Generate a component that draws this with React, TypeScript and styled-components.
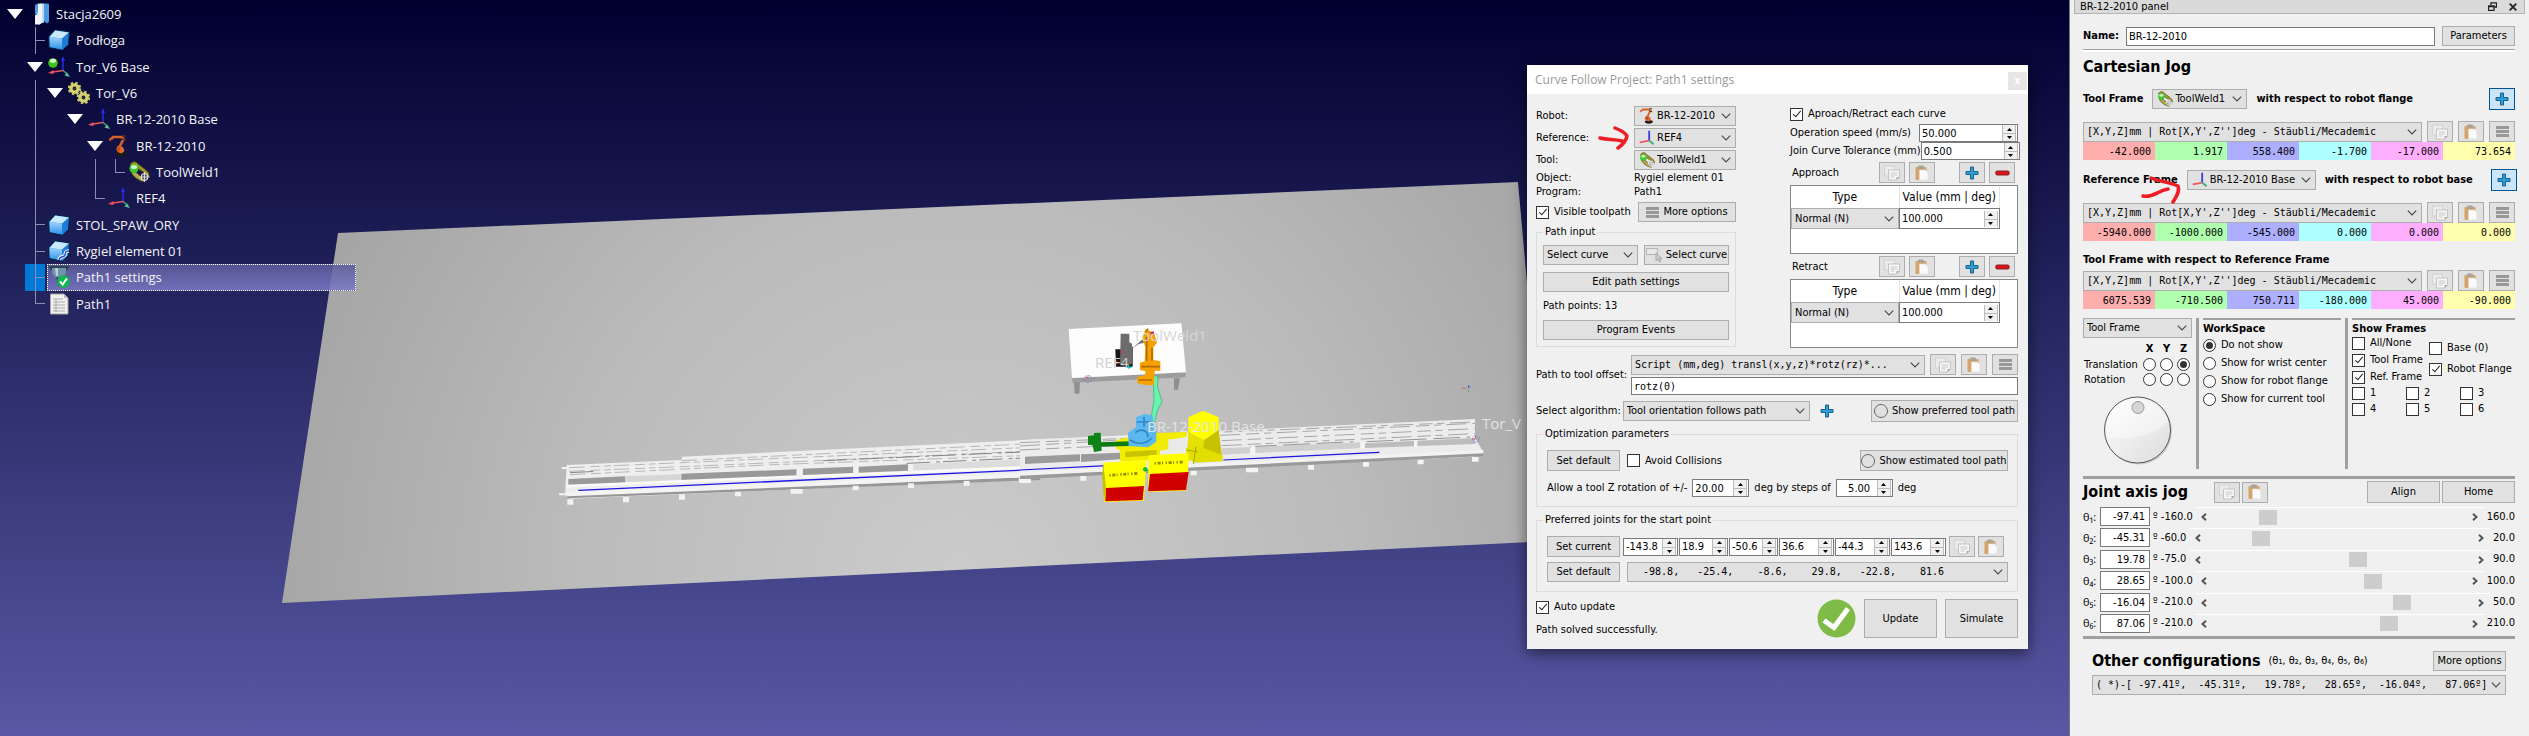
import React from "react";
import styled, { createGlobalStyle, css } from "styled-components";

const ui = `"DejaVu Sans Condensed", "DejaVu Sans", Tahoma, sans-serif`;
const mono = `"DejaVu Sans Mono", Consolas, monospace`;
const humanist = `"Open Sans", "Segoe UI", sans-serif`;

const Global = createGlobalStyle`
  *, *::before, *::after { box-sizing: border-box; }
  body { margin: 0; background: #00002f; font: 11px/14px ${ui}; color: #000; }
  button, input, select { font: inherit; color: inherit; margin: 0; }
`;

/* ---------- shell ---------- */

const Shell = styled.div`
  display: flex;
  min-height: 100vh;
  overflow: hidden;
`;

const Viewport = styled.main`
  position: relative;
  flex: 1;
  min-width: 0;
  background: linear-gradient(#00002f, #5858a4);
`;

const SceneSvg = styled.svg`
  position: absolute;
  inset: 0;
  width: 100%;
  height: 100%;
`;

/* ---------- station tree ---------- */

const Tree = styled.ul`
  position: relative;
  display: grid;
  grid-template-rows: repeat(12, 1fr);
  width: 356px;
  height: 316px;
  margin: 1px 0 0;
  padding: 0 0 0 5px;
  list-style: none;
  font: 13px/20px ${humanist};
  color: #f4f4f8;
`;

const TreeRow = styled.li`
  display: flex;
  align-items: stretch;
`;

const line = "#8d8db0";
const Guide = styled.span<{ $kind: string; $active?: boolean }>`
  flex: none;
  display: flex;
  align-items: center;
  justify-content: center;
  width: 20px;
  background-repeat: no-repeat;
  ${({ $kind }) =>
    ($kind === "|" || $kind === "+" || $kind === "L") &&
    css`
      background-image: linear-gradient(${line}, ${line}),
        linear-gradient(${line}, ${line});
      background-position: 10px 0, 10px 50%;
      background-size: 1px ${$kind === "L" ? "50%" : "100%"},
        ${$kind === "|" ? "0 0" : "10px 1px"};
    `}
  ${({ $active }) => $active && "background-color: #0078d7;"}
`;

const TreeItem = styled.span<{ $active?: boolean }>`
  display: flex;
  flex: 1;
  align-items: center;
  gap: 6px;
  margin-left: 2px;
  white-space: nowrap;
  border: 1px solid transparent;
  ${({ $active }) =>
    $active &&
    css`
      border: 1px dotted #fff;
      background: linear-gradient(#5c5c9ce0, #7a7ac6e0);
    `}
`;

/* ---------- controls ---------- */

const Button = styled.button<{ $w?: number; $h?: number; $on?: boolean }>`
  flex: none;
  display: flex;
  align-items: center;
  justify-content: center;
  gap: 4px;
  width: ${({ $w }) => ($w ? `${$w}px` : "100%")};
  height: ${({ $h }) => $h ?? 20}px;
  padding: 0;
  white-space: nowrap;
  background: ${({ $on }) => ($on ? "#cce4f7" : "#e1e1e1")};
  border: 1px solid ${({ $on }) => ($on ? "#005499" : "#adadad")};
`;

const SelectBox = styled.span<{ $w?: number; $mono?: boolean }>`
  display: grid;
  align-items: center;
  ${({ $w }) => ($w ? `flex: none; width: ${$w}px;` : "flex: 1; min-width: 0;")}
  height: 20px;
  background: #e1e1e1;
  border: 1px solid #adadad;
  ${({ $mono }) => $mono && `font: 10px/14px ${mono};`}
  & > * {
    grid-area: 1 / 1;
  }
  & > svg {
    pointer-events: none;
    z-index: 1;
    margin-left: 4px;
  }
  & > svg:last-child {
    justify-self: end;
    margin-right: 4px;
  }
`;

const NativeSelect = styled.select<{ $icon?: boolean }>`
  appearance: none;
  width: 100%;
  height: 100%;
  padding: 0 0 0 ${({ $icon }) => ($icon ? 22 : 3)}px;
  border: 0;
  background: transparent;
  white-space: pre;
`;

const Field = styled.input<{ $w?: number; $right?: boolean }>`
  ${({ $w }) => ($w ? `flex: none; width: ${$w}px;` : "flex: 1; min-width: 0;")}
  height: 19px;
  padding: 0 ${({ $right }) => ($right ? 4 : 2)}px;
  border: 1px solid #7a7a7a;
  background: #fff;
  text-align: ${({ $right }) => ($right ? "right" : "left")};
`;

const ScriptField = styled(Field)`
  width: 100%;
  flex: none;
  height: 18px;
  font: 10px/14px ${mono};
`;

const SpinBox = styled.span<{ $w: number }>`
  flex: none;
  display: flex;
  align-items: center;
  width: ${({ $w }) => $w}px;
  height: 18px;
  padding-right: 1px;
  background: #fff;
  border: 1px solid #7a7a7a;
  input {
    flex: 1;
    width: 0;
    min-width: 0;
    height: 16px;
    padding: 0 0 0 2px;
    border: 0;
    background: transparent;
  }
`;

const Steps = styled.span`
  display: grid;
  width: 14px;
  height: 16px;
  border: solid #bbb;
  border-width: 0 1px;
  button {
    display: flex;
    align-items: center;
    justify-content: center;
    padding: 0;
    height: 8px;
    border: 0;
    background: #f0f0f0;
  }
  button + button {
    border-top: 1px solid #bbb;
  }
`;

const Tick = styled.label`
  display: flex;
  align-items: center;
  gap: 5px;
  white-space: nowrap;
`;

const Box = styled.input`
  appearance: none;
  display: grid;
  place-items: center;
  flex: none;
  width: 13px;
  height: 13px;
  background: #fff;
  border: 1px solid #333;
  &:checked::before {
    content: "";
    width: 4px;
    height: 8px;
    margin-bottom: 2px;
    border: solid #222;
    border-width: 0 1px 1px 0;
    transform: rotate(40deg);
  }
`;

const Dot = styled.input`
  appearance: none;
  display: grid;
  place-items: center;
  flex: none;
  width: 13px;
  height: 13px;
  border: 1px solid #333;
  border-radius: 50%;
  background: #fff;
  &:checked::before {
    content: "";
    width: 7px;
    height: 7px;
    border-radius: 50%;
    background: #333;
  }
`;

const Ring = styled.span`
  width: 14px;
  height: 14px;
  border: 1px solid #666;
  border-radius: 50%;
`;

const Row = styled.div<{ $h?: number; $gap?: number; $mt?: number; $center?: boolean }>`
  display: flex;
  align-items: center;
  ${({ $center }) => $center && "justify-content: center;"}
  white-space: nowrap;
  gap: ${({ $gap }) => $gap ?? 0}px;
  margin-top: ${({ $mt }) => $mt ?? 0}px;
  ${({ $h }) => $h && `height: ${$h}px;`}
`;

const Stack = styled.div<{ $gap?: number }>`
  display: flex;
  flex-direction: column;
  flex: 1;
  min-width: 0;
  gap: ${({ $gap }) => $gap ?? 0}px;
`;

const Push = styled.span<{ $w?: number }>`
  flex: ${({ $w }) => ($w ? `0 0 ${$w}px` : "1")};
`;

/* ---------- dialog ---------- */

const Dialog = styled.section`
  position: absolute;
  top: 65px;
  right: 41px;
  width: 501px;
  background: #f0f0f0;
  box-shadow: 0 4px 14px rgba(0, 0, 0, 0.55);
`;

const DialogBar = styled.header`
  display: flex;
  align-items: center;
  justify-content: space-between;
  height: 29px;
  padding: 0 1px 0 8px;
  background: #fff;
  color: #999;
  font: 12px/16px ${humanist};
  h2 {
    margin: 0;
    font: inherit;
  }
`;

const CloseButton = styled.button`
  width: 19px;
  height: 18px;
  margin-top: 3px;
  padding: 0;
  border: 0;
  background: #e6e6e6;
  color: #fff;
  font: bold 10px/14px ${ui};
`;

const DialogBody = styled.div`
  display: flex;
  flex-direction: column;
  gap: 6px;
  padding: 10px 10px 10px 9px;
`;

const Split = styled.div`
  display: flex;
  justify-content: space-between;
`;

const LeftColumn = styled.div`
  width: 200px;
`;

const RightColumn = styled.div`
  display: flex;
  flex-direction: column;
  gap: 2px;
  width: 228px;
  padding-top: 2px;
`;

const FormGrid = styled.div`
  position: relative;
  display: grid;
  grid-template-columns: 98px 102px;
  grid-template-rows: 23px 22px 22px 14px 14px;
  align-items: center;
`;

const OffsetLabel = styled.label`
  flex: none;
  width: 95px;
`;

const Group = styled.fieldset`
  min-width: 0;
  margin: 0;
  padding: 9px 9px 9px 10px;
  border: 1px solid #dcdcdc;
  legend {
    height: 14px;
    margin-left: -4px;
    padding: 0 2px;
  }
`;

const PathGroup = styled(Group)`
  margin-top: 2px;
  padding: 6px;
  legend {
    margin-left: 0;
  }
`;

const MoveBar = styled.div`
  display: flex;
  align-items: center;
  gap: 4px;
  height: 21px;
  padding: 0 3px 0 2px;
`;

const MoveFrame = styled.div`
  height: 69px;
  background: #fff;
  border: 1px solid #828790;
  table {
    width: 209px;
    border-collapse: collapse;
    table-layout: fixed;
  }
  th {
    height: 22px;
    padding: 0;
    font-weight: normal;
    font-size: 12px;
    border-right: 1px solid #e5e5e5;
  }
  th:first-child {
    width: 108px;
  }
  td {
    padding: 0;
  }
  td > span {
    width: 100%;
    height: 21px;
  }
`;

/* ---------- robot panel ---------- */

const Panel = styled.aside`
  flex: none;
  width: 460px;
  border-left: 1px solid #777;
  background: #f0f0f0;
`;

const PanelBar = styled.header`
  display: flex;
  align-items: center;
  gap: 12px;
  height: 14px;
  margin: 0 4px;
  padding: 0 7px 0 5px;
  background: #dadada;
  border: solid #b4b4b4;
  border-width: 0 1px 1px;
  h2 {
    flex: 1;
    margin: 0;
    font: 11px/12px ${ui};
  }
  button {
    display: flex;
    padding: 0;
    border: 0;
    background: none;
  }
`;

const PanelBody = styled.div`
  padding: 12px 14px 0 13px;
`;

const Title = styled.h3`
  margin: 0;
  font: bold 16px/24px ${ui};
  white-space: nowrap;
`;

const Strong = styled.b`
  white-space: nowrap;
`;

const NameLabel = styled.label`
  font-weight: bold;
`;

const Rule = styled.hr<{ $thick?: boolean; $mt: number }>`
  height: 3px;
  margin: ${({ $mt }) => $mt}px 0 0;
  border: 0;
  background: ${({ $thick }) => ($thick ? "#a0a0a0" : "#fff")};
  border-top: ${({ $thick }) => ($thick ? "0" : "1px solid #a0a0a0")};
`;

const Values = styled.div`
  display: grid;
  grid-template-columns: repeat(6, 1fr);
  input {
    width: 100%;
    height: 18px;
    padding: 0 4px 0 0;
    border: 0;
    text-align: right;
    font: 10px/14px ${mono};
  }
`;

const ValueCell = styled.input<{ $tint: string }>`
  background: ${({ $tint }) => $tint};
`;

const Trio = styled.div`
  display: grid;
  grid-template-columns: 109px 1fr 170px;
  gap: 4px;
  height: 151px;
  margin-top: 9px;
`;

const Ruled = styled.div`
  padding: 4px 0 0 4px;
  border-left: 3px solid #a0a0a0;
  background: linear-gradient(#a0a0a0, #a0a0a0) 4px 0 / 100% 2px no-repeat;
`;

const AxisGrid = styled.div`
  display: grid;
  grid-template-columns: 57px 17px 17px 17px;
  grid-template-rows: 17px 15px 15px;
  align-items: center;
  justify-items: center;
  margin-top: 2px;
  padding-left: 1px;
  & > span {
    justify-self: start;
  }
`;

const WorkList = styled.div`
  display: grid;
  grid-auto-rows: 18px;
`;

const FrameCols = styled.div`
  display: grid;
  grid-template-columns: 77px 1fr;
`;

const FrameCol = styled.div<{ $pad?: number; $gap?: number }>`
  display: grid;
  align-content: start;
  padding-top: ${({ $pad }) => $pad ?? 0}px;
  gap: ${({ $gap }) => $gap ?? 3}px;
`;

const NumberGrid = styled.div`
  display: grid;
  grid-template-columns: repeat(3, 54px);
  gap: 2px 0;
  margin-top: 2px;
`;

const Joints = styled.div`
  display: flex;
  flex-direction: column;
  justify-content: space-between;
  height: 126px;
  margin-top: 4px;
`;

const JointRow = styled.div`
  display: flex;
  align-items: center;
  gap: 3px;
  height: 19px;
`;

const JointLabel = styled.label`
  width: 14px;
  white-space: nowrap;
  font-family: ${humanist};
`;

const Scroll = styled.span`
  display: flex;
  align-items: center;
  flex: 1;
  height: 19px;
  border-top: 1px solid #fff;
  button {
    display: flex;
    justify-content: center;
    width: 17px;
    padding: 0;
    border: 0;
    background: none;
  }
  input {
    appearance: none;
    flex: 1;
    width: 0;
    height: 15px;
    background: transparent;
  }
  input::-webkit-slider-thumb {
    appearance: none;
    width: 18px;
    height: 15px;
    background: #cdcdcd;
  }
`;

const Other = styled.div`
  padding: 12px 9px 0;
`;

const Annotation = styled.svg<{ $x: number; $y: number }>`
  position: absolute;
  left: ${({ $x }) => $x}px;
  top: ${({ $y }) => $y}px;
  z-index: 2;
  pointer-events: none;
`;

const Anchor = styled(Row)`
  position: relative;
`;

/* ---------- icons ---------- */

const Chevron = () => (
  <svg width="10" height="6" viewBox="0 0 10 6" fill="none" stroke="#444">
    <path d="M.8 .7 5 4.9 9.200 .7" strokeWidth="1.100" />
  </svg>
);
const CopyIcon = () => (
  <svg width="16" height="16" viewBox="0 0 16 16">
    <rect x=".5" y="1" width="10" height="10" fill="#ebebeb" stroke="#d2d2d2" />
    <path d="M4.500 5h11v7l-3 3h-8z" fill="#f7f7f7" stroke="#c2c2c2" />
    <path d="M6.500 8h7M6.500 10h7M6.500 12h4" stroke="#c8c8c8" />
    <path d="M12.500 15v-3h3z" fill="#aaa" />
  </svg>
);
const PasteIcon = () => (
  <svg width="16" height="16" viewBox="0 0 16 16">
    <rect x="1.500" y="2" width="11" height="13" rx="1" fill="#d6a468" />
    <rect x="4" y=".5" width="6" height="3.500" rx="1" fill="#a9a39a" />
    <path d="M5.500 5h6l2.500 2.500V15H5.500z" fill="#fafafa" stroke="#ddd" strokeWidth=".6" />
  </svg>
);
const MenuIcon = () => (
  <svg width="13" height="11" viewBox="0 0 13 11" fill="#989898">
    <path d="M0 0h13v3H0zM0 4h13v3H0zM0 8h13v3H0z" />
  </svg>
);
const PlusIcon = () => (
  <svg width="14" height="14" viewBox="0 0 14 14">
    <path d="M5.500 1h3v4.500H13v3H8.500V13h-3V8.500H1v-3h4.500z" fill="#2a9fd8" stroke="#1f5f86" strokeLinejoin="round" />
  </svg>
);
const MinusIcon = () => (
  <svg width="15" height="6" viewBox="0 0 15 6">
    <rect x=".7" y="1" width="13.500" height="4" rx="1.500" fill="#d91616" stroke="#8c2020" />
  </svg>
);
const AxesIcon = ({ ball }: { ball?: boolean }) => (
  <svg width="22" height="22" viewBox="0 0 22 22">
    <path d="M15 14V4" stroke="#2a2aee" strokeWidth="1.500" />
    <path d="M15 0l2 5h-4z" fill="#2a2aee" />
    <path d="M15 14.500 5 16" stroke="#f0525e" strokeWidth="1.500" />
    <path d="M0 17l5.500-3v4z" fill="#f0525e" />
    <path d="M15 14.500l5 4" stroke="#3fae7c" strokeWidth="1.500" />
    <path d="M22 21l-5.500-1.500 2.500-3z" fill="#56c596" />
    {ball && (
      <>
        <circle cx="5" cy="7" r="4.800" fill="#3fc21c" />
        <ellipse cx="5" cy="4.800" rx="3" ry="2" fill="#d8f7cc" />
      </>
    )}
  </svg>
);
const SmallAxes = () => (
  <svg width="16" height="16" viewBox="0 0 22 22">
    <path d="M14 14V1" stroke="#3b3be6" strokeWidth="2.500" />
    <path d="M14 14.500 1 17" stroke="#ee5a64" strokeWidth="2.500" />
    <path d="M14 14.500l6 5" stroke="#3fae7c" strokeWidth="2.500" />
  </svg>
);
const RobotIcon = ({ size = 22 }: { size?: number }) => (
  <svg width={size} height={size} viewBox="0 0 22 22">
    <ellipse cx="13.500" cy="19" rx="5.500" ry="2.500" fill="#1a1a1a" />
    <path d="M3 4.500 5 2h9l1.500 2-4 8" fill="none" stroke="#d9622b" strokeWidth="2.600" strokeLinejoin="round" />
    <path d="M9 11l6 1 1.500 4-3 2.500-4-1.500z" fill="#e06b30" />
    <circle cx="10.500" cy="14" r="2.300" fill="#c24f1d" />
    <path d="M14 1h4M14 4l4 1" stroke="#552d1b" strokeWidth="1.500" />
    <path d="M2 3v3" stroke="#d9622b" strokeWidth="1.500" />
  </svg>
);
const ToolIcon = ({ size = 22 }: { size?: number }) => (
  <svg width={size} height={size} viewBox="0 0 22 22">
    <path d="M2 4c2-4 6-4 8-1l9 7c3 3 2 6 2 6l-3-3-7-5z" fill="#a39a2c" stroke="#55501a" />
    <path d="M3 10c1 5 6 8 10 10l4 1-2-3-6-6z" fill="#b3ab4a" stroke="#55501a" />
    <circle cx="6" cy="7.500" r="4.500" fill="#3fc930" />
    <ellipse cx="6" cy="6" rx="3" ry="2" fill="#cff7c6" />
    <circle cx="16.500" cy="16" r="3.500" fill="#8889" stroke="#f0f0f0" />
    <path d="M16.500 11v10M11.500 16h10" stroke="#f0f0f0" strokeWidth=".8" />
  </svg>
);
const CubeIcon = ({ curve }: { curve?: boolean }) => (
  <svg width="22" height="22" viewBox="0 0 22 22">
    <defs>
      <linearGradient id="cubeFace" x1="0" y1="0" x2="0" y2="1">
        <stop offset="0" stopColor="#9ed3fb" />
        <stop offset="1" stopColor="#2f93ea" />
      </linearGradient>
    </defs>
    <path d="M.8 7.500 7 .8l14.500 2-1 12.700-6 5.700L1 18.500z" fill="#1d7ad6" stroke="#05203f" />
    <path d="M1.500 8 7.200 1.600l13.600 1.800L14 9.500z" fill="#c9e7fd" />
    <path d="M1.500 8 14 9.500l.3 11L2 18z" fill="url(#cubeFace)" />
    {curve && <path d="M11 20c1-5 5-2 6-5s0-4 4-4" fill="none" stroke="#fff" strokeWidth="3.500" />}
    {curve && <path d="M11 20c1-5 5-2 6-5s0-4 4-4" fill="none" stroke="#2a49d0" strokeWidth="1.500" />}
  </svg>
);
const StationIcon = () => (
  <svg width="22" height="22" viewBox="0 0 22 22">
    <path d="M7 11V2l3-1.500h10l1 .5v18l-2 1.500z" fill="#4a97e2" />
    <path d="M10 1.500l6-1v19l-6 2z" fill="#b8dcfa" />
    <path d="M7 12c3 0 3-1 3-11l4-.5v18L12 21.500H7z" fill="#f1f3f5" />
  </svg>
);
const GearShape = ({ x, y }: { x: number; y: number }) => (
  <g transform={`translate(${x} ${y})`}>
    <circle r="5.600" fill="none" stroke="#c9c566" strokeWidth="2.400" strokeDasharray="2.400 2" />
    <circle r="3.600" fill="none" stroke="#d5d070" strokeWidth="3.400" />
    <circle r="1.500" fill="#333" />
  </g>
);
const GearsIcon = () => (
  <svg width="22" height="22" viewBox="0 0 22 22">
    <GearShape x={6.500} y={6.500} />
    <GearShape x={15.500} y={15.500} />
  </svg>
);
const SettingsIcon = () => (
  <svg width="22" height="22" viewBox="0 0 22 22">
    <path d="M0 0h22l-3 4H3z" fill="#2c4350" />
    <path d="M4 2h14v5l-3 4H7L4 7z" fill="#6f93a6" />
    <path d="M7 2h3v8H8z" fill="#b9d0dc" />
    <path d="M8 11h6l-1 5-2 5-2-5z" fill="#3b5664" />
    <circle cx="15.500" cy="15.500" r="6.300" fill="#12b84e" />
    <path d="M12 15.500l2.800 3 4-6" fill="none" stroke="#fff" strokeWidth="2" />
  </svg>
);
const PageIcon = () => (
  <svg width="22" height="22" viewBox="0 0 22 22">
    <path d="M2.500 1H16l4 4v16H2.500z" fill="#f0f0ee" stroke="#a5a5a5" />
    <path d="M16 1v4h4z" fill="#bbb" />
    <path d="M5 6h10M5 9h12M5 12h12M5 15h12M5 18h12M8 6v13" stroke="#aaa" />
  </svg>
);
const Caret = () => (
  <svg width="16" height="10" viewBox="0 0 16 10">
    <path d="M0 0h16L8 10z" fill="#fff" />
  </svg>
);
const PickIcon = () => (
  <svg width="16" height="16" viewBox="0 0 16 16">
    <rect x=".5" y="1.500" width="11" height="6" fill="#e8e8e8" stroke="#b5b5b5" />
    <path d="M10 6v8l2-2 1.500 3 1.500-.8-1.400-2.700H16z" fill="#ccc" stroke="#999" strokeWidth=".7" />
  </svg>
);
const SolvedIcon = () => (
  <svg width="39" height="39" viewBox="0 0 39 39">
    <circle cx="19.500" cy="19.500" r="19" fill="#7fbc47" />
    <path d="M7 21.500l10 7L31 9.500" fill="none" stroke="#fff" strokeWidth="5" />
  </svg>
);
const Triangle = ({ down }: { down?: boolean }) => (
  <svg width="5" height="3" viewBox="0 0 5 3">
    <path d={down ? "M0 0h5L2.500 3z" : "M0 3h5L2.500 0z"} />
  </svg>
);
const ScrollArrow = ({ right }: { right?: boolean }) => (
  <svg width="6" height="8" viewBox="0 0 6 8" fill="none" stroke="#555" strokeWidth="2">
    <path d={right ? "M1 .8 4.500 4 1 7.200" : "M5 .8 1.500 4 5 7.200"} />
  </svg>
);
const DialIcon = () => (
  <svg width="70" height="70" viewBox="0 0 70 70">
    <defs>
      <linearGradient id="dial" x1="0" y1="0" x2="1" y2="1">
        <stop offset="0" stopColor="#fff" />
        <stop offset="1" stopColor="#dcdcdc" />
      </linearGradient>
    </defs>
    <circle cx="35.500" cy="36" r="33.500" fill="#ccc" />
    <circle cx="34.500" cy="35" r="33" fill="url(#dial)" stroke="#555" />
    <path d="M4 42c20 4 45 0 61-15a32 32 0 0 0-61 0z" fill="#fff" opacity=".4" />
    <circle cx="35" cy="12.500" r="6" fill="#d6d6d6" stroke="#999" />
  </svg>
);

/* ---------- composed controls ---------- */

type SelectProps = { label: string; value: string; w?: number; icon?: React.ReactNode; code?: boolean };
const Select = ({ label, value, w, icon, code }: SelectProps) => (
  <SelectBox $w={w} $mono={code}>
    {icon}
    <NativeSelect aria-label={label} $icon={!!icon}>
      <option>{value}</option>
    </NativeSelect>
    <Chevron />
  </SelectBox>
);

const Spin = ({ label, value, w }: { label: string; value: string; w: number }) => (
  <SpinBox $w={w}>
    <input aria-label={label} defaultValue={value} />
    <Steps>
      <button type="button" aria-label={`Increase ${label}`}><Triangle /></button>
      <button type="button" aria-label={`Decrease ${label}`}><Triangle down /></button>
    </Steps>
  </SpinBox>
);

const Check = ({ label, on }: { label: string; on?: boolean }) => (
  <Tick><Box type="checkbox" defaultChecked={on} />{label}</Tick>
);

const CopyPaste = () => (
  <>
    <Button $w={26} $h={21} aria-label="Copy"><CopyIcon /></Button>
    <Button $w={26} $h={21} aria-label="Paste"><PasteIcon /></Button>
  </>
);

const Moves = ({ name }: { name: string }) => (
  <>
    <MoveBar>
      {name}
      <Push />
      <CopyPaste />
      <Push $w={16} />
      <Button $w={26} $h={21} aria-label={`Add ${name}`}><PlusIcon /></Button>
      <Button $w={26} $h={21} aria-label={`Remove ${name}`}><MinusIcon /></Button>
    </MoveBar>
    <MoveFrame>
      <table>
        <thead><tr><th>Type</th><th>Value (mm | deg)</th></tr></thead>
        <tbody>
          <tr>
            <td><Select label={`${name} type`} value="Normal (N)" w={107} /></td>
            <td><Spin label={`${name} value`} value="100.000" w={101} /></td>
          </tr>
        </tbody>
      </table>
    </MoveFrame>
  </>
);

const tints = ["#ffaeae", "#aeffae", "#aeaeff", "#aeffff", "#ffaeff", "#ffffae"];
const axisNames = ["X", "Y", "Z", "RX", "RY", "RZ"];
const Pose = ({ name, values, mt }: { name: string; values: string[]; mt?: number }) => (
  <>
    <Row $h={21} $gap={5} $mt={mt ?? 11}>
      <Select label={`${name} format`} value="[X,Y,Z]mm | Rot[X,Y',Z'']deg - Stäubli/Mecademic" code />
      <CopyPaste />
      <Button $w={26} $h={21} aria-label={`${name} menu`}><MenuIcon /></Button>
    </Row>
    <Values>
      {values.map((v, i) => (
        <ValueCell key={i} aria-label={`${name} ${axisNames[i]}`} defaultValue={v} $tint={tints[i]} />
      ))}
    </Values>
  </>
);

/* ---------- data ---------- */

const tree = [
  { text: "Stacja2609", guides: "v", icon: <StationIcon /> },
  { text: "Podłoga", guides: " +", icon: <CubeIcon /> },
  { text: "Tor_V6 Base", guides: " v", icon: <AxesIcon ball /> },
  { text: "Tor_V6", guides: " |v", icon: <GearsIcon /> },
  { text: "BR-12-2010 Base", guides: " | v", icon: <AxesIcon /> },
  { text: "BR-12-2010", guides: " |  v", icon: <RobotIcon /> },
  { text: "ToolWeld1", guides: " |  |L", icon: <ToolIcon /> },
  { text: "REF4", guides: " |  L", icon: <AxesIcon /> },
  { text: "STOL_SPAW_ORY", guides: " +", icon: <CubeIcon /> },
  { text: "Rygiel element 01", guides: " +", icon: <CubeIcon curve /> },
  { text: "Path1 settings", guides: " +", icon: <SettingsIcon />, active: true },
  { text: "Path1", guides: " L", icon: <PageIcon /> },
];

const joints = [
  { sub: "₁", value: "-97.41", min: -160, max: 160 },
  { sub: "₂", value: "-45.31", min: -60, max: 20 },
  { sub: "₃", value: "19.78", min: -75, max: 90 },
  { sub: "₄", value: "28.65", min: -100, max: 100 },
  { sub: "₅", value: "-16.04", min: -210, max: 50 },
  { sub: "₆", value: "87.06", min: -210, max: 210 },
];

const startJoints: [string, number][] = [
  ["-143.8", 55], ["18.9", 49], ["-50.6", 49], ["36.6", 55], ["-44.3", 55], ["143.6", 55],
];

/* ---------- scene ---------- */

const Scene = () => (
  <SceneSvg viewBox="0 0 2069 736" preserveAspectRatio="xMinYMin slice" aria-hidden="true">
    <defs>
      <radialGradient id="floor" gradientUnits="userSpaceOnUse" cx="960" cy="580" r="780">
        <stop offset="0" stopColor="#cbcbcb" />
        <stop offset=".5" stopColor="#bbb" />
        <stop offset="1" stopColor="#a0a0a0" />
      </radialGradient>
      <pattern id="holes" width="12" height="12" patternUnits="userSpaceOnUse" patternTransform="rotate(-3)">
        <rect width="12" height="12" fill="#fff" />
        <path d="M2 2h3v2H2zM8 8h2v2H8z" fill="#dedede" />
      </pattern>
    </defs>
    <path d="M338 233 1518 182 1550 541 282 603z" fill="url(#floor)" />

    {/* left half of the linear track */}
    <g transform="translate(540 400) scale(.33333)">
      <path d="M80 195 425 180V170L1500 118V238L90 296 75 285z" fill="#eee" />
      <path d="M85 237 255 229V252L85 260z" fill="#9a9a9a" />
      <path d="M255 229 422 222V246L255 254z" fill="#d6d6d6" />
      <path d="M424 221 770 208V232L424 246z" fill="#999" />
      <path d="M788 206 940 200V224L788 230z" fill="#999" />
      <path d="M956 200 1104 193V217L956 223z" fill="#999" />
      <path d="M1120 193 1450 178V200L1120 214z" fill="#dcdcdc" />
      <path d="M1452 160H1500V194H1452z" fill="#a0a0a0" />
      <path d="M82 295 1500 240V230L82 285z" fill="#979797" />
      <path d="M82 283 1500 224" stroke="#f4f4f4" strokeWidth="12" />
      <path d="M88 203 425 188 1450 143M88 214 500 197 1450 154M90 224 700 194 1450 167M425 182 1450 132" stroke="#9c9c9c" strokeWidth="2" strokeDasharray="46 17 30 12 20 9" fill="none" />
      <path d="M850 182 1450 156M1100 190 1450 174M90 218 170 214" stroke="#707070" strokeWidth="2.500" strokeDasharray="70 18 12 9" />
      <path d="M80 258 1500 200" stroke="#fafafa" strokeWidth="8" />
      <path d="M115 271 1500 208" stroke="#1c14e0" strokeWidth="4" />
      <path d="M82 298h18v16H82zM249 291h18v16h-18zM417 283h18v16h-18zM585 275h18v14h-18zM752 267h36v14h-36zM938 257h18v14h-18zM1104 250h18v14h-18zM1271 243h18v14h-18zM1436 235h36v12h-36zM65 201h20v6H65zM57 280h26v6H57zM770 208h18v28h-18zM940 200h14v24h-14zM1104 192h14v24h-14z" fill="#f2f2f2" />
    </g>

    <g transform="translate(1020 300) scale(.33333)">
      {/* right half of the track */}
      <path d="M0 420 400 402 1365 357 1365 415 1390 455 1360 470 0 530z" fill="#ececec" />
      <path d="M605 445 690 441V460L605 464zM705 441 1020 427V445L705 459z" fill="#cfcfcf" />
      <path d="M1035 430 1365 414V432L1035 444z" fill="#bdbdbd" />
      <path d="M15 470 180 463V484L15 492zM183 463 300 458V478L183 486z" fill="#9b9b9b" />
      <path d="M0 538 1390 468 1390 456 0 526z" fill="#9a9a9a" />
      <path d="M0 522 1390 455" stroke="#f3f3f3" strokeWidth="10" />
      <path d="M0 428 320 415M0 450 300 436M600 406 1365 370M605 422 1365 386M605 437 1365 401M0 438 300 420M610 396 1365 366" stroke="#979797" strokeWidth="2.500" strokeDasharray="60 18 40 14 22 16" />
      <path d="M0 510 260 497M610 480 1078 457" stroke="#1c14e0" strokeWidth="3.500" />
      <path d="M1040 425 1350 411M690 440 1000 425" stroke="#666" strokeWidth="2" strokeDasharray="80 20" />
      <path d="M0 537h32v12H0zM181 528h18v14h-18zM512 512h18v14h-18zM678 503h36v14h-36zM864 495h18v14h-18zM1029 486h18v14h-18zM1193 479h18v14h-18zM1356 471h20v14h-20zM692 438h14v26h-14zM1022 427h12v20h-12zM1182 420h10v20h-10z" fill="#f4f4f4" />

      {/* welding table */}
      <path d="M162 245h18l-2 36h-14zM462 235h18l-6 34h-12z" fill="#8f8f8f" />
      <path d="M156 234 498 217 496 232 158 248z" fill="#9c9c9c" />
      <path d="M146 87 484 70 498 217 156 234z" fill="url(#holes)" />
      <path d="M286 148h18v-8h34v60h-50z" fill="#161616" />
      <path d="M302 101h26v26l8 4v62h-36z" fill="#6c6c6c" />
      <path d="M302 150v10M290 180v14" stroke="#e02020" strokeWidth="3" />
      <path d="M318 202h16M326 196v10" stroke="#00c8d8" strokeWidth="4" />
      <circle cx="204" cy="237" r="11" fill="none" stroke="#7a6ee8" strokeWidth="2" strokeDasharray="9 4" />
      <path d="M204 237V226M196 232h8" stroke="#d44" strokeWidth="2" />
      <path d="M336 146 362 122 378 112 372 128 356 132z" fill="#6b7378" />

      {/* arm */}
      <path d="M400 228h14l-2 30 14 48-14 26-12 52-12-2 14-80z" fill="#67f5ae" stroke="#2fae73" strokeWidth="2" />
      <path d="M376 88 388 92 402 98 411 128 400 142 400 180 421 184 421 212 404 212 402 254 380 256 352 250 352 230 376 226 376 214 360 210 360 188 374 184 376 140 366 118z" fill="#f7a100" />
      <path d="M380 112v70M396 144v38M364 200h56M356 240h40M384 86l-6 10" stroke="#b06c00" strokeWidth="5" />
      <path d="M388 98 402 94v12z" fill="#cc1166" />

      {/* carriage and cabinets */}
      <path d="M288 420 380 400 500 396 500 410 446 420 446 448 420 452 420 480 300 484 300 450 288 446z" fill="#f1ec00" />
      <path d="M316 455 410 450v16l-94 6z" fill="#c9c400" />
      <path d="M240 427 330 424V438L240 440z" fill="#0a7a12" />
      <path d="M204 408 222 406 222 399 242 398 245 452 222 456 218 436 204 434z" fill="#0c8416" />
      <path d="M445 418h50v36h-50z" fill="#e9e9e9" />
      <path d="M505 352 549 332 596 352 596 390 552 420 505 395z" fill="#ff0" />
      <path d="M505 395 552 420 545 475 500 484z" fill="#e6e200" />
      <path d="M596 390 552 420 545 475 606 470z" fill="#c7c200" />
      <path d="M497 445 540 440 608 466 608 484 525 488 500 470z" fill="#e2de00" />
      <path d="M520 492l8-52M500 450l34 6" stroke="#a8a400" strokeWidth="3" />
      <path d="M348 352 372 342 398 346 402 376 410 392 408 426 384 442 326 438 324 398 348 382z" fill="#5db7f0" />
      <path d="M350 366h42M346 398c20-18 44 0 36 14M330 420c20 14 46 14 66-6M372 350v30" fill="none" stroke="#2d86c4" strokeWidth="5" />
      <path d="M250 488 372 480 380 485 374 560 372 602 252 606z" fill="#ff0" />
      <path d="M250 488 258 566 252 606 247 530z" fill="#c4bf00" />
      <path d="M258 564 372 558 368 600 256 604z" fill="#d10000" />
      <path d="M386 466 506 460 504 518 498 572 384 576z" fill="#ff0" />
      <path d="M390 522 506 516 498 570 384 574z" fill="#d10000" />
      <path d="M404 490 492 486M268 526 352 520" stroke="#8f8a00" strokeWidth="8" strokeDasharray="4 5 9 4 3 8" />
      <circle cx="376" cy="508" r="7" fill="#0cc43c" />

      {/* free frames */}
      <path d="M1324 265h16" stroke="#e05050" strokeWidth="2" />
      <path d="M1346 256v8" stroke="#4b4bf0" strokeWidth="4" />
      <path d="M1346 270v8" stroke="#3fc24b" strokeWidth="3" />
      <circle cx="1367" cy="417" r="10" fill="none" stroke="#7a6ee8" strokeWidth="2" strokeDasharray="9 4" />
      <path d="M1367 417v-10M1358 417h8" stroke="#d44" strokeWidth="2" />
    </g>

    <g fill="#e4e4e4" fontFamily={humanist} fontSize="15">
      <text x="1133" y="341" fill="#d6d6d6">ToolWeld1</text>
      <text x="1095" y="368" fill="#d0d0d0">REF4</text>
      <text x="1147" y="432">BR-12-2010 Base</text>
      <text x="1482" y="429">Tor_V</text>
    </g>
  </SceneSvg>
);

/* ---------- dialog ---------- */

const SettingsDialog = () => (
  <Dialog aria-label="Path1 settings">
    <DialogBar>
      <h2>Curve Follow Project: Path1 settings</h2>
      <CloseButton aria-label="Close">x</CloseButton>
    </DialogBar>
    <DialogBody>
      <Split>
        <LeftColumn>
          <FormGrid>
            <span>Robot:</span>
            <Select label="Robot" value="BR-12-2010" w={102} icon={<RobotIcon size={16} />} />
            <span>Reference:</span>
            <Select label="Reference" value="REF4" w={102} icon={<SmallAxes />} />
            <span>Tool:</span>
            <Select label="Tool" value="ToolWeld1" w={102} icon={<ToolIcon size={16} />} />
            <span>Object:</span><span>Rygiel element 01</span>
            <span>Program:</span><span>Path1</span>
            <Annotation $x={62} $y={21} width="32" height="26" viewBox="0 0 32 26" fill="none" stroke="#ee1c24" strokeWidth="3.500" strokeLinecap="round" strokeLinejoin="round">
              <path d="M2 13c8 2 14 1 22 3M17 3c5 2 10 4 12 8-1 6-5 9-9 12" />
            </Annotation>
          </FormGrid>
          <Row $h={22} $mt={2}>
            <Check label="Visible toolpath" on />
            <Push />
            <Button $w={98}><MenuIcon />More options</Button>
          </Row>
          <PathGroup>
            <legend>Path input</legend>
            <Stack $gap={7}>
              <Row $gap={6}>
                <Select label="Path input" value="Select curve" />
                <Button $w={85}><PickIcon />Select curve</Button>
              </Row>
              <Button>Edit path settings</Button>
              <span>Path points: 13</span>
              <Button>Program Events</Button>
            </Stack>
          </PathGroup>
        </LeftColumn>
        <RightColumn>
          <Row $h={16}><Check label="Aproach/Retract each curve" on /></Row>
          <div>
            <Row><span>Operation speed (mm/s)</span><Push /><Spin label="Operation speed" value="50.000" w={99} /></Row>
            <Row><span>Join Curve Tolerance (mm)</span><Push /><Spin label="Join Curve Tolerance" value="0.500" w={99} /></Row>
          </div>
          <Moves name="Approach" />
          <Moves name="Retract" />
        </RightColumn>
      </Split>

      <Row>
        <OffsetLabel htmlFor="offset">Path to tool offset:</OffsetLabel>
        <Stack $gap={2}>
          <Row $h={21} $gap={5}>
            <Select label="Offset format" value="Script (mm,deg) transl(x,y,z)*rotz(rz)*..." code />
            <CopyPaste />
            <Button $w={26} $h={21} aria-label="Offset menu"><MenuIcon /></Button>
          </Row>
          <ScriptField id="offset" defaultValue="rotz(0)" />
        </Stack>
      </Row>

      <Row $h={20} $gap={10}>
        <Row $gap={2}>
          <span>Select algorithm:</span>
          <Select label="Select algorithm" value="Tool orientation follows path" w={187} />
        </Row>
        <PlusIcon />
        <Push />
        <Button $w={147} $h={22}><Ring />Show preferred tool path</Button>
      </Row>

      <Group>
        <legend>Optimization parameters</legend>
        <Row $gap={7}>
          <Button $w={73} $h={21}>Set default</Button>
          <Check label="Avoid Collisions" />
          <Push />
          <Button $w={148} $h={21}><Ring />Show estimated tool path</Button>
        </Row>
        <Row $gap={5} $mt={8}>
          <span>Allow a tool Z rotation of +/-</span>
          <Spin label="Z rotation" value="20.00" w={57} />
          <span>deg by steps of</span>
          <Spin label="Step" value="   5.00" w={57} />
          <span>deg</span>
        </Row>
      </Group>

      <Group>
        <legend>Preferred joints for the start point</legend>
        <Row $gap={3}>
          <Button $w={73} $h={21}>Set current</Button>
          <Row $gap={1}>
            {startJoints.map(([v, w], i) => (
              <Spin key={i} label={`Start joint ${i + 1}`} value={v} w={w} />
            ))}
          </Row>
          <CopyPaste />
        </Row>
        <Row $gap={7} $mt={5}>
          <Button $w={73}>Set default</Button>
          <Select
            label="Start joint presets"
            value={"\u00a0\u00a0-98.8,\u00a0\u00a0\u00a0-25.4,\u00a0\u00a0\u00a0\u00a0-8.6,\u00a0\u00a0\u00a0\u00a029.8,\u00a0\u00a0\u00a0-22.8,\u00a0\u00a0\u00a0\u00a081.6"}
            code
          />
        </Row>
      </Group>

      <Row $gap={8} $h={41}>
        <Stack $gap={9}>
          <Check label="Auto update" on />
          <span>Path solved successfully.</span>
        </Stack>
        <SolvedIcon />
        <Button $w={73} $h={39}>Update</Button>
        <Button $w={73} $h={39}>Simulate</Button>
      </Row>
    </DialogBody>
  </Dialog>
);

/* ---------- robot panel ---------- */

const RobotPanel = () => (
  <Panel aria-label="BR-12-2010 panel">
    <PanelBar>
      <h2>BR-12-2010 panel</h2>
      <button aria-label="Float">
        <svg width="9" height="9" viewBox="0 0 9 9" fill="none" stroke="#222"><path d="M3 3V.8h5.500V5H6M.5 4h5.500v4.500H.5zM.5 4.500H6" strokeWidth="1.300" /></svg>
      </button>
      <button aria-label="Close panel">
        <svg width="8" height="8" viewBox="0 0 8 8" stroke="#222" strokeWidth="1.800"><path d="M.7.7l6.600 6.600M7.300.7.700 7.300" /></svg>
      </button>
    </PanelBar>
    <PanelBody>
      <Row $h={20} $gap={7}>
        <NameLabel htmlFor="robot-name">Name:</NameLabel>
        <Field id="robot-name" defaultValue="BR-12-2010" />
        <Button $w={73}>Parameters</Button>
      </Row>
      <Rule $mt={3} />
      <Row $mt={3}><Title>Cartesian Jog</Title></Row>

      <Row $h={22} $gap={9} $mt={9}>
        <Strong>Tool Frame</Strong>
        <Select label="Tool Frame" value="ToolWeld1" w={95} icon={<ToolIcon size={16} />} />
        <Strong>with respect to robot flange</Strong>
        <Push />
        <Button $w={26} $h={22} $on aria-label="Add tool"><PlusIcon /></Button>
      </Row>
      <Pose name="Tool" values={["-42.000", "1.917", "558.400", "-1.700", "-17.000", "73.654"]} />

      <Anchor $h={22} $gap={9} $mt={9}>
        <Strong>Reference Frame</Strong>
        <Select label="Reference Frame" value="BR-12-2010 Base" w={129} icon={<SmallAxes />} />
        <Strong>with respect to robot base</Strong>
        <Push />
        <Button $w={26} $h={22} $on aria-label="Add reference"><PlusIcon /></Button>
        <Annotation $x={58} $y={6} width="42" height="30" viewBox="0 0 42 30" fill="none" stroke="#ee1c24" strokeWidth="3.500" strokeLinecap="round" strokeLinejoin="round">
          <path d="M2 21c10 2 14-5 25-7M10 3c10 4 18 4 27 8 2 6-2 11-5 16" />
        </Annotation>
      </Anchor>
      <Pose name="Reference" values={["-5940.000", "-1000.000", "-545.000", "0.000", "0.000", "0.000"]} />

      <Row $h={16} $mt={11}><Strong>Tool Frame with respect to Reference Frame</Strong></Row>
      <Pose name="Relative" mt={2} values={["6075.539", "-710.500", "750.711", "-180.000", "45.000", "-90.000"]} />

      <Trio>
        <div>
          <Row><Select label="Jog frame" value="Tool Frame" /></Row>
          <AxisGrid>
            <span /><b>X</b><b>Y</b><b>Z</b>
            <span>Translation</span>
            {["X", "Y", "Z"].map((a) => (
              <Dot key={a} type="radio" name="jog" aria-label={`Translation ${a}`} defaultChecked={a === "Z"} />
            ))}
            <span>Rotation</span>
            {["X", "Y", "Z"].map((a) => (
              <Dot key={a} type="radio" name="jog" aria-label={`Rotation ${a}`} />
            ))}
          </AxisGrid>
          <Row $mt={8} $center><DialIcon /></Row>
        </div>
        <Ruled>
          <Strong>WorkSpace</Strong>
          <WorkList>
            {["Do not show", "Show for wrist center", "Show for robot flange", "Show for current tool"].map((t, i) => (
              <Tick key={t}><Dot type="radio" name="workspace" defaultChecked={i === 0} />{t}</Tick>
            ))}
          </WorkList>
        </Ruled>
        <Ruled>
          <Strong>Show Frames</Strong>
          <FrameCols>
            <FrameCol>
              <Check label="All/None" />
              <Check label="Tool Frame" on />
              <Check label="Ref. Frame" on />
            </FrameCol>
            <FrameCol $pad={5} $gap={7}>
              <Check label="Base (0)" />
              <Check label="Robot Flange" on />
            </FrameCol>
          </FrameCols>
          <NumberGrid>
            {["1", "2", "3", "4", "5", "6"].map((n) => <Check key={n} label={n} />)}
          </NumberGrid>
        </Ruled>
      </Trio>

      <Rule $thick $mt={7} />
      <Row $h={22} $gap={2} $mt={2}>
        <Title>Joint axis jog</Title>
        <Push $w={22} />
        <CopyPaste />
        <Push />
        <Button $w={73} $h={22}>Align</Button>
        <Button $w={73} $h={22}>Home</Button>
      </Row>
      <Joints>
        {joints.map((j, i) => (
          <JointRow key={i}>
            <JointLabel htmlFor={`joint-${i}`}>θ{j.sub}:</JointLabel>
            <Field id={`joint-${i}`} $w={50} $right defaultValue={j.value} />
            <span>º {j.min.toFixed(1)}</span>
            <Scroll>
              <button aria-label="Step down"><ScrollArrow /></button>
              <input type="range" aria-label={`Joint ${i + 1}`} min={j.min} max={j.max} step="any" defaultValue={j.value} />
              <button aria-label="Step up"><ScrollArrow right /></button>
            </Scroll>
            <span>{j.max.toFixed(1)}</span>
          </JointRow>
        ))}
      </Joints>
      <Rule $thick $mt={3} />

      <Other>
        <Row $h={20} $gap={8}>
          <Title>Other configurations</Title>
          <span>(θ₁, θ₂, θ₃, θ₄, θ₅, θ₆)</span>
          <Push />
          <Button $w={73}>More options</Button>
        </Row>
        <Row $mt={4}>
          <Select
            label="Other configurations"
            value={"(\u00a0*)-[\u00a0-97.41º,\u00a0\u00a0-45.31º,\u00a0\u00a0\u00a019.78º,\u00a0\u00a0\u00a028.65º,\u00a0\u00a0-16.04º,\u00a0\u00a0\u00a087.06º]"}
            code
          />
        </Row>
      </Other>
    </PanelBody>
  </Panel>
);

export default function App() {
  return (
    <Shell>
      <Global />
      <Viewport>
        <Scene />
        <Tree>
          {tree.map((n) => (
            <TreeRow key={n.text}>
              {[...n.guides].map((g, i) => (
                <Guide key={i} $kind={g} $active={n.active && i === 1}>
                  {g === "v" && <Caret />}
                </Guide>
              ))}
              <TreeItem $active={n.active}>{n.icon}{n.text}</TreeItem>
            </TreeRow>
          ))}
        </Tree>
        <SettingsDialog />
      </Viewport>
      <RobotPanel />
    </Shell>
  );
}
